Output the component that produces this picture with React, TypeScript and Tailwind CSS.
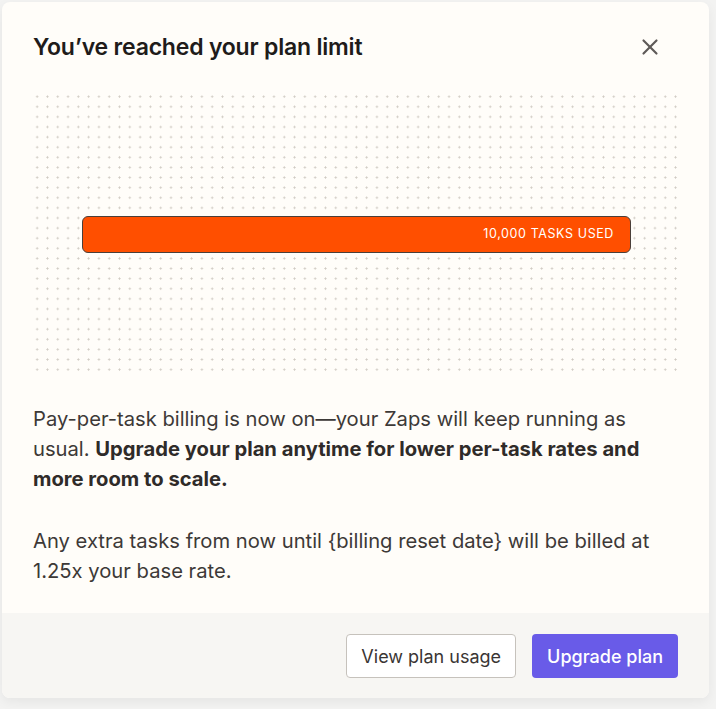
import { X } from "lucide-react";

export default function App() {
  return (
    <div className="min-h-screen bg-[#f3f3f2] pl-[2px] pt-[2px] font-['Inter',sans-serif]">
      <div className="w-[707px] overflow-hidden rounded-[8px] bg-[#fffdf9] shadow-[0_4px_12px_rgba(0,0,0,0.06)]">
        <div className="flex items-center justify-between pl-[31px] pr-[46px] pt-[29px]">
          <h2 className="text-[23px] font-semibold leading-[32px] tracking-[-0.2px] text-[#201b1a]">
            You’ve reached your plan limit
          </h2>
          <X className="h-[26px] w-[26px] text-[#5f5a58]" strokeWidth={2} />
        </div>

        <div className="ml-[30px] mt-[30px] flex h-[283px] w-[649px] items-center justify-center bg-[radial-gradient(circle,#cfcac2_0.85px,transparent_1.15px)] bg-[size:10.3px_10.12px] bg-[position:0px_-1.4px]">
          <div className="flex h-[37px] w-[549px] items-center justify-end rounded-[6px] border border-[#4a3f3a] bg-[#ff4f00] pr-[16px]">
            <span className="text-[12.5px] tracking-[0.6px] text-white">10,000 TASKS USED</span>
          </div>
        </div>

        <div className="px-[31px] pt-[28px] pb-[27px] text-[20.2px] leading-[30px] text-[#3d3937]">
          <p>
            Pay-per-task billing is now on—your Zaps will keep running as usual.{" "}
            <span className="font-bold text-[#2f2b29]">
              Upgrade your plan anytime for lower per-task rates and more room to scale.
            </span>
          </p>
          <p className="mt-[32px]">
            {"Any extra tasks from now until {billing reset date} will be billed at 1.25x your base rate."}
          </p>
        </div>

        <div className="flex justify-end gap-[16px] bg-[#f7f6f3] pb-[20px] pr-[31px] pt-[21px]">
          <button className="h-[44px] rounded-[4px] border border-[#c6c2bc] bg-white px-[14px] text-[18px] text-[#3a3533]">
            View plan usage
          </button>
          <button className="h-[44px] rounded-[4px] bg-[#695be8] px-[15px] text-[18px] font-medium text-white">
            Upgrade plan
          </button>
        </div>
      </div>
    </div>
  );
}
